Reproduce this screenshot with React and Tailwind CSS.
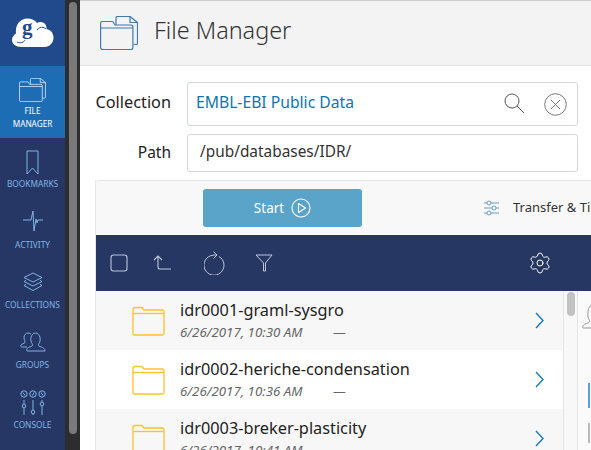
import React from 'react';
import { Settings } from 'lucide-react';

const font = { fontFamily: '"Noto Sans", sans-serif' };

function FilesIcon({ className }) {
  return (
    <svg viewBox="0 0 38 34" className={className} fill="none" stroke="currentColor" strokeWidth="1.200" strokeLinejoin="round">
      <path d="M16 9V2a1.500 1.500 0 0 1 1.500-1.500H30L37.500 6.500V27a1.500 1.500 0 0 1-1.500 1.500h-2.500" />
      <path d="M30 .5v6h7.500" />
      <path d="M.6 12V7a1.500 1.500 0 0 1 1.500-1.500h10.500l2.500 3.500h16a1.800 1.800 0 0 1 1.800 1.800V31.500a2 2 0 0 1-2 2H2.600a2 2 0 0 1-2-2z" />
      <path d="M.6 12h32.200" />
    </svg>
  );
}

function GlobusLogo() {
  return (
    <svg viewBox="0 -5 42 35" className="w-[42px] h-[35px]">
      <path fill="#fff" d="M9 29C4 29 0 26 0 22c0-3 1.500-5 4-6.500C3 7 8 .5 15.500.5c4 0 7.500 1.500 9.500 4.500 3-2 7-1 8.500 1.500 1 1.500 1 3 1 4.500 4 .8 7 4 7 8.500 0 5.500-4 9.500-9 9.500z" />
      <path fill="none" stroke="#214a8c" strokeWidth="1" d="M5 24c4 2 7 0 8-2M25 12c3-4 7-3 9-1" />
      <text x="10" y="16" fontSize="21" fontWeight="700" fill="#214a8c" fontFamily="Liberation Serif, serif">g</text>
    </svg>
  );
}

function BookmarkIcon() {
  return (
    <svg viewBox="0 0 13 25" className="w-[13px] h-[25px]" fill="none" stroke="currentColor" strokeWidth="1">
      <path d="M1 1h11v23l-5.500-6L1 24z" />
    </svg>
  );
}

function ActivityIcon() {
  return (
    <svg viewBox="0 0 22 22" className="w-[22px] h-[22px]" fill="none" stroke="currentColor" strokeWidth="1">
      <path d="M1 10h8l2-9 1 20 2-12 1 4 1-3h5" />
    </svg>
  );
}

function LayersIcon() {
  return (
    <svg viewBox="0 0 20 20" className="w-[20px] h-[20px]" fill="none" stroke="currentColor" strokeWidth="1" strokeLinejoin="round">
      <path d="M10 1l9 4.500-9 4.500-9-4.500z" />
      <path d="M3 8.500L1 9.500l9 4.500 9-4.500-2-1" />
      <path d="M3 12.500l-2 1 9 5 9-5-2-1" />
    </svg>
  );
}

function GroupsIcon() {
  return (
    <svg viewBox="0 0 26 20" className="w-[26px] h-[20px]" fill="none" stroke="currentColor" strokeWidth="1">
      <path d="M7 19c-1-2 0-3 4-4.500 2-.8 2-1.500 1-3-1-1.500-1.500-3.500-1-6 .5-2.500 2-4.500 4.500-4.500s4 2 4.500 4.500c.5 2.500 0 4.500-1 6-1 1.500-1 2.200 1 3 4 1.500 5 2.500 5 4.500z" />
      <path d="M7 15H2c-1 0-1.500-1-1-2 .5-.8 3-1.500 4-2.500.5-1-1-2.500-1-5C4 3 6 1 8 1c1 0 2 .3 3 1" />
    </svg>
  );
}

function ConsoleIcon() {
  return (
    <svg viewBox="0 0 26 26" className="w-[26px] h-[26px]" fill="none" stroke="currentColor" strokeWidth="1">
      <circle cx="4" cy="4" r="3.200" />
      <circle cx="13" cy="4" r="3.200" />
      <circle cx="22" cy="4" r="3.200" />
      <path d="M3 2.500l2 3M12.500 5.500L14 2.500M21 2.500l2 3" />
      <path d="M4 10v4M4 18v7M13 10v10M13 24v1M22 10v2M22 16v9" />
      <circle cx="4" cy="16" r="1.800" />
      <circle cx="13" cy="22" r="1.800" />
      <circle cx="22" cy="14" r="1.800" />
    </svg>
  );
}

function NavItem({ icon, label, gap = 'mt-[7px]' }) {
  return (
    <div className="h-[60px] flex flex-col items-center text-[#7fb4e4]">
      <div className="flex-1 flex items-end justify-center">{icon}</div>
      <span className={`text-[8.3px] leading-[12px] ${gap} mb-[5px]`}>{label}</span>
    </div>
  );
}

function Sidebar() {
  return (
    <div className="w-[65px] h-full shrink-0 bg-[#263766] flex flex-col">
      <div className="h-[66px] bg-[#214a8c] flex items-center justify-center pb-[5px]">
        <GlobusLogo />
      </div>
      <div className="h-[72px] bg-[#1d6db5] flex flex-col items-center pt-[12px] text-[#cfe3f6]">
        <FilesIcon className="w-[27px] h-[24px]" />
        <span className="text-[8.2px] leading-[13px] mt-[2px] text-center text-white">FILE<br />MANAGER</span>
      </div>
      <div className="h-[58px] flex flex-col items-center pt-[12px] text-[#7fb4e4]">
        <BookmarkIcon />
        <span className="text-[8.300px] leading-[12px] mt-[3px]">BOOKMARKS</span>
      </div>
      <NavItem icon={<ActivityIcon />} label="ACTIVITY" />
      <NavItem icon={<LayersIcon />} label="COLLECTIONS" />
      <NavItem icon={<GroupsIcon />} label="GROUPS" />
      <NavItem icon={<ConsoleIcon />} label="CONSOLE" gap="mt-[3px]" />
    </div>
  );
}

function PageScrollbar() {
  return (
    <div className="w-[15px] h-full shrink-0 bg-[#2d2d2d] pl-[4px] pt-[2px]">
      <div className="w-[8px] h-[432px] rounded-[4px] bg-[#7a7a7a]" />
    </div>
  );
}

function FolderIcon() {
  return (
    <svg viewBox="0 0 33 30" className="w-[33px] h-[30px]" fill="none" stroke="#fcc425" strokeWidth="1.300" strokeLinejoin="round">
      <path d="M1 28V3a1.500 1.500 0 0 1 1.500-1.500h7.500L12 4h19a1.500 1.500 0 0 1 1 1.500V27.500a1.500 1.500 0 0 1-1.500 1.500H2.500A1.500 1.500 0 0 1 1 28z" />
      <path d="M1 7.500h31" />
    </svg>
  );
}

function Chevron() {
  return (
    <svg viewBox="0 0 9 17" className="w-[9px] h-[17px]" fill="none" stroke="#1479bb" strokeWidth="1.400">
      <path d="M1 1l7 7.500-7 7.500" />
    </svg>
  );
}

function FileRow({ name, date, striped }) {
  return (
    <div className={`h-[59px] shrink-0 flex ${striped ? 'bg-[#f7f7f7]' : 'bg-white'}`}>
      <div className="w-[84px] shrink-0 pl-[36px] pt-[15px]">
        <FolderIcon />
      </div>
      <div className="flex-1 pt-[9px]">
        <p className="text-[16.300px] leading-[21px] text-[#222]">{name}</p>
        <div className="flex text-[13.300px] leading-[18px] italic text-[#666] mt-[2px]">
          <span className="w-[153px]">{date}</span>
          <span>—</span>
        </div>
      </div>
      <div className="w-[28px] shrink-0 pt-[21px]">
        <Chevron />
      </div>
    </div>
  );
}

export default function App() {
  return (
    <div className="w-[591px] h-[450px] flex overflow-hidden bg-white" style={font}>
      <Sidebar />
      <PageScrollbar />
      <div className="flex-1 min-w-0 flex flex-col overflow-hidden">
        <div className="h-[66px] shrink-0 bg-[#f3f3f3] border-t border-t-[#cccccc] border-b border-b-[#e2e2e2] flex items-center pl-[20px] text-[#3c7ab8]">
          <FilesIcon className="w-[38px] h-[34px] shrink-0" />
          <h1 className="ml-[16px] mb-[4px] text-[23.400px] font-light text-[#333]">File Manager</h1>
        </div>

        <div className="pl-[15px] pt-[16px] flex flex-col gap-[8px]">
          <div className="flex items-center">
            <label className="w-[76px] shrink-0 text-right text-[16.300px] leading-[22px] mb-[5px] text-[#222]">Collection</label>
            <div className="ml-[16px] w-[391px] shrink-0 h-[44px] border border-[#d3d7dd] rounded-[3px] flex items-center pl-[8px] pr-[10px]">
              <span className="flex-1 text-[15.700px] leading-[22px] mb-[4px] text-[#0f75ad]">EMBL-EBI Public Data</span>
              <svg viewBox="0 0 21 21" className="w-[21px] h-[21px] mr-[19px] mb-[2px]" fill="none" stroke="#555" strokeWidth="1">
                <circle cx="8" cy="8" r="7" />
                <path d="M13 13l7 7" />
              </svg>
              <svg viewBox="0 0 23 23" className="w-[23px] h-[23px]" fill="none" stroke="#777" strokeWidth="1">
                <circle cx="11.500" cy="11.500" r="10.800" />
                <path d="M7 7l9 9M16 7l-9 9" />
              </svg>
            </div>
          </div>
          <div className="flex items-center">
            <label className="w-[76px] shrink-0 text-right text-[15.500px] leading-[22px] mb-[2px] text-[#222]">Path</label>
            <div className="ml-[16px] w-[391px] shrink-0 h-[38px] border border-[#d3d7dd] rounded-[3px] flex items-center pl-[12px]">
              <span className="text-[15.400px] leading-[22px] mb-[2px] text-[#333]">/pub/databases/IDR/</span>
            </div>
          </div>
        </div>

        <div className="ml-[15px] mt-[8px] w-[600px] flex-1 flex flex-col border-l border-[#e6e6e6]">
          <div className="h-[55px] shrink-0 bg-[#f8f8f8] border-t border-[#e4e4e4] rounded-tl-[3px] flex items-center pl-[107px]">
            <button className="w-[159px] h-[38px] shrink-0 rounded-[3px] bg-[#5aa4ca] flex items-center justify-center text-white text-[13.500px]">
              Start
              <svg viewBox="0 0 20 20" className="w-[20px] h-[20px] ml-[7px]" fill="none" stroke="#fff" strokeWidth="1.100">
                <circle cx="10" cy="10" r="9" />
                <path d="M7.500 5.500v9l7-4.500z" strokeLinejoin="round" />
              </svg>
            </button>
            <svg viewBox="0 0 15 16" className="w-[15px] h-[16px] ml-[122px] shrink-0" fill="none" stroke="#6a9cca" strokeWidth="1">
              <path d="M0 3h3M7 3h8M0 8h8M12 8h3M0 13h3M7 13h8" />
              <circle cx="5" cy="3" r="2" />
              <circle cx="10" cy="8" r="2" />
              <circle cx="5" cy="13" r="2" />
            </svg>
            <span className="ml-[14px] text-[13px] text-[#333] whitespace-nowrap">Transfer &amp; Timer Options</span>
          </div>

          <div className="h-[56px] shrink-0 bg-[#273763] flex items-center pl-[14px] text-[#bfc6d8]">
            <svg viewBox="0 0 18 18" className="w-[18px] h-[18px] shrink-0" fill="none" stroke="currentColor" strokeWidth="1.100">
              <rect x="1" y="1" width="16" height="16" rx="2.500" />
            </svg>
            <svg viewBox="0 0 19 16" className="w-[19px] h-[16px] ml-[25px] shrink-0" fill="none" stroke="currentColor" strokeWidth="1.100">
              <path d="M1 5l4-4 4 4M5 1v11a2 2 0 0 0 2 2h11" />
            </svg>
            <svg viewBox="0 0 22 24" className="w-[22px] h-[24px] ml-[32px] shrink-0" fill="none" stroke="currentColor" strokeWidth="1">
              <path d="M15 5.500A10 10 0 1 1 9 4.200c1-.2 2-.3 3-.2" />
              <path d="M9.500 .7L13 4l-3.500 3.500" />
            </svg>
            <svg viewBox="0 0 18 18" className="w-[18px] h-[18px] ml-[29px] shrink-0" fill="none" stroke="currentColor" strokeWidth="1" strokeLinejoin="round">
              <path d="M1 1h16l-6.500 8v8h-2V9z" />
            </svg>
            <Settings className="w-[24px] h-[24px] ml-[255px] shrink-0 text-white" strokeWidth={1} />
          </div>

          <div className="flex flex-1 min-h-0">
            <div className="w-[467px] shrink-0 flex flex-col overflow-hidden">
              <FileRow name="idr0001-graml-sysgro" date="6/26/2017, 10:30 AM" striped />
              <FileRow name="idr0002-heriche-condensation" date="6/26/2017, 10:36 AM" />
              <FileRow name="idr0003-breker-plasticity" date="6/26/2017, 10:41 AM" striped />
            </div>
            <div className="w-[15px] shrink-0 bg-[#f8f8f8] border-l border-r border-[#e4e4e4] pl-[3px] pt-[1px]">
              <div className="w-[8px] h-[24px] rounded-[4px] bg-[#c2c2c2]" />
            </div>
            <div className="flex-1 bg-[#fafafa] pl-[4px] pt-[12px] flex flex-col overflow-hidden">
              <svg viewBox="0 0 26 26" className="w-[26px] h-[26px] shrink-0" fill="none" stroke="#999" strokeWidth="1">
                <path d="M1 25c-1-2 1-4 5-5 2-.8 2-2 1-3.500-1-1.500-1.500-4-1-8C6.500 4 9 1 13 1s6.500 3 7 7.500c.5 4 0 6.500-1 8-1 1.500-1 2.700 1 3.500 4 1 6 3 5 5z" />
              </svg>
              <div className="mt-[54px] ml-[6px] w-[2px] h-[25px] shrink-0 bg-[#5aa4ca]" />
              <div className="mt-[15px] ml-[6px] w-[2px] h-[20px] shrink-0 bg-[#bbb]" />
            </div>
          </div>
        </div>
      </div>
    </div>
  );
}
